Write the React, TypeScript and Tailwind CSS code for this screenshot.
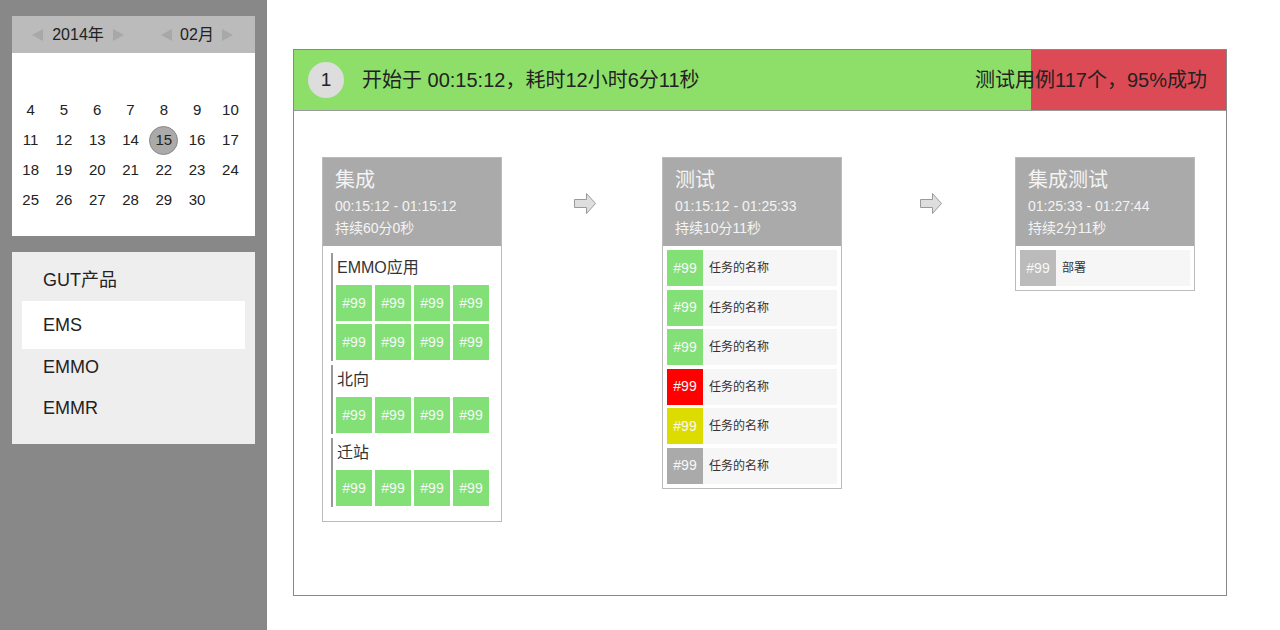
import React from 'react'

const font = "font-['Liberation_Sans','Noto_Sans_CJK_SC',sans-serif]"

const days = [
  [4, 5, 6, 7, 8, 9, 10],
  [11, 12, 13, 14, 15, 16, 17],
  [18, 19, 20, 21, 22, 23, 24],
  [25, 26, 27, 28, 29, 30],
]

const menu = [
  { name: 'GUT产品', h: 'h-[42px]' },
  { name: 'EMS', h: 'h-[48px]', active: true },
  { name: 'EMMO', h: 'h-[37px]' },
  { name: 'EMMR', h: 'h-[44px]' },
]

const groups = [
  { name: 'EMMO应用', count: 8 },
  { name: '北向', count: 4 },
  { name: '迁站', count: 4 },
]

const tasks = [
  'bg-[#82e077]',
  'bg-[#82e077]',
  'bg-[#82e077]',
  'bg-[#ff0000]',
  'bg-[#dcdc00]',
  'bg-[#aaaaaa]',
]

function TriLeft() {
  return <span className="w-0 h-0 border-y-[6.5px] border-y-transparent border-r-[11px] border-r-[#a8a8a8]" />
}

function TriRight() {
  return <span className="w-0 h-0 border-y-[6.5px] border-y-transparent border-l-[11px] border-l-[#a8a8a8]" />
}

function Calendar() {
  return (
    <div className="bg-white">
      <div className="flex items-center h-[37px] bg-[#bbbbbb] text-[16px] text-[#222]">
        <div className="ml-[20px] w-[92px] flex items-center justify-between">
          <TriLeft />
          <span>2014年</span>
          <TriRight />
        </div>
        <div className="ml-[37px] w-[72px] flex items-center justify-between">
          <TriLeft />
          <span>02月</span>
          <TriRight />
        </div>
      </div>
      <div className="pt-[42px] pb-[21px] pl-[2px] grid grid-cols-[repeat(7,33.3px)] text-[15px] text-[#222]">
        {days.flat().map((d) => (
          <div key={d} className="h-[30px] flex items-center justify-center">
            {d === 15 ? (
              <span className="w-[29px] h-[29px] rounded-full bg-[#aaaaaa] border border-[#888] flex items-center justify-center">
                {d}
              </span>
            ) : (
              d
            )}
          </div>
        ))}
      </div>
    </div>
  )
}

function Arrow() {
  return (
    <svg width="22" height="21" viewBox="0 0 22 21">
      <polygon
        points="0.5,6.5 12.5,6.5 12.5,0.5 21.5,10.5 12.5,20.5 12.5,14.5 0.5,14.5"
        fill="#dedede"
        stroke="#9a9a9a"
      />
    </svg>
  )
}

function StageHead({ title, time, dur }: { title: string; time: string; dur: string }) {
  return (
    <div className="bg-[#aaaaaa] px-[12px] pt-[9px] pb-[7px] text-[#f4f4f4]">
      <div className="text-[20px] leading-[26px]">{title}</div>
      <div className="mt-[2px] text-[14px] leading-[22px]">{time}</div>
      <div className="text-[14px] leading-[22px]">{dur}</div>
    </div>
  )
}

function TaskRow({ color, name }: { color: string; name: string }) {
  return (
    <div className="flex items-center h-[36px] bg-[#f6f6f6]">
      <div className={`w-[36px] h-[36px] ${color} flex items-center justify-center text-[14px] text-[#f8f8f8]`}>#99</div>
      <span className="ml-[6px] text-[12px] text-[#333]">{name}</span>
    </div>
  )
}

export default function App() {
  return (
    <div className={`flex h-screen min-h-[630px] ${font}`}>
      <aside className="w-[267px] shrink-0 bg-[#888888] pt-[16px] px-[12px]">
        <Calendar />
        <div className="mt-[16px] bg-[#eeeeee] px-[10px] pt-[7px] pb-[14px]">
          {menu.map((m) => (
            <div
              key={m.name}
              className={`${m.h} flex items-center pl-[21px] text-[18px] text-[#222] ${m.active ? 'bg-white' : ''}`}
            >
              {m.name}
            </div>
          ))}
        </div>
      </aside>

      <main className="flex-1 bg-white pl-[26px] pt-[49px]">
        <div className="w-[934px] h-[547px] border border-[#888]">
          <div className="relative h-[61px] bg-[#8ddf69] border-b border-[#999] flex items-center text-[20px] text-[#222]">
            <div className="absolute right-0 top-0 bottom-0 w-[195px] bg-[#dc4a55]" />
            <div className="relative ml-[14px] w-[36px] h-[36px] rounded-full bg-[#dddddd] flex items-center justify-center text-[19px]">1</div>
            <span className="relative ml-[18px]">开始于 00:15:12，耗时12小时6分11秒</span>
            <span className="relative ml-auto mr-[19px]">测试用例117个，95%成功</span>
          </div>

          <div className="flex items-start pl-[28px] pt-[46px]">
            <div className="w-[180px] border border-[#bbb] bg-white">
              <StageHead title="集成" time="00:15:12 - 01:15:12" dur="持续60分0秒" />
              <div className="pt-[7px] pb-[14px] pl-[8px] flex flex-col gap-[4px]">
                {groups.map((g) => (
                  <div key={g.name} className="border-l-2 border-[#999] pl-[3px] pb-[1px]">
                    <div className="pl-[1px] text-[16px] leading-[30px] text-[#333]">{g.name}</div>
                    <div className="mt-[2px] grid grid-cols-[repeat(4,36px)] gap-[3px]">
                      {Array.from({ length: g.count }).map((_, i) => (
                        <div key={i} className="h-[36px] bg-[#82e077] flex items-center justify-center text-[14px] text-[#f8f8f8]">
                          #99
                        </div>
                      ))}
                    </div>
                  </div>
                ))}
              </div>
            </div>

            <div className="mt-[36px] ml-[72px] mr-[66px]">
              <Arrow />
            </div>

            <div className="w-[180px] border border-[#bbb] bg-white">
              <StageHead title="测试" time="01:15:12 - 01:25:33" dur="持续10分11秒" />
              <div className="p-[4px] flex flex-col gap-[3.5px]">
                {tasks.map((c, i) => (
                  <TaskRow key={i} color={c} name="任务的名称" />
                ))}
              </div>
            </div>

            <div className="mt-[36px] ml-[78px] mr-[73px]">
              <Arrow />
            </div>

            <div className="w-[180px] border border-[#bbb] bg-white">
              <StageHead title="集成测试" time="01:25:33 - 01:27:44" dur="持续2分11秒" />
              <div className="p-[4px]">
                <TaskRow color="bg-[#bbbbbb]" name="部署" />
              </div>
            </div>
          </div>
        </div>
      </main>
    </div>
  )
}
